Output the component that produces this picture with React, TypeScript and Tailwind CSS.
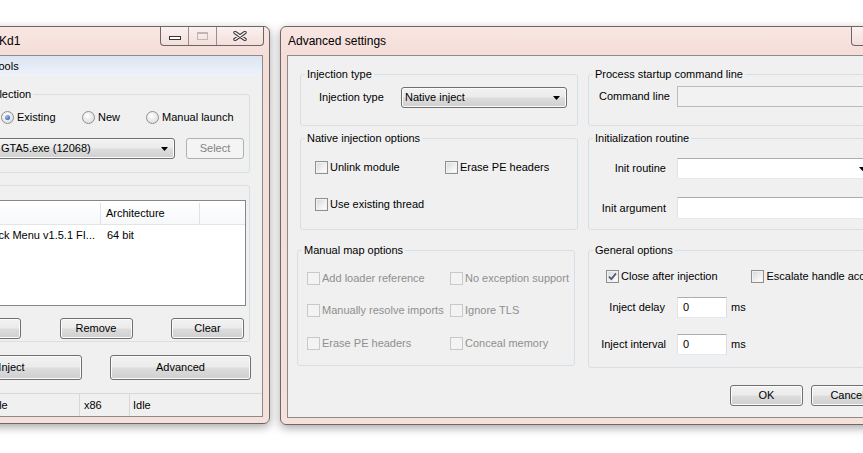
import React from "react";

type Kids = { children?: React.ReactNode; className?: string };

const btnFace =
  "flex items-center justify-center rounded-[3px] border border-[#707070] bg-[linear-gradient(to_bottom,#f2f2f2_0%,#ebebeb_48%,#dddddd_52%,#cfcfcf_100%)] shadow-[inset_0_0_0_1px_#fbfbfb]";

function Button({ children, className = "" }: Kids) {
  return <div className={`${btnFace} ${className}`}>{children}</div>;
}

function Arrow() {
  return (
    <svg width="7" height="4" viewBox="0 0 7 4" className="shrink-0">
      <path d="M0 0h7L3.5 4z" fill="#000" />
    </svg>
  );
}

function Combo({ children, className = "" }: Kids) {
  return (
    <div
      className={`flex h-[21px] items-center justify-between rounded-[3px] border border-[#707070] bg-[linear-gradient(to_bottom,#f2f2f2_0%,#ebebeb_48%,#dddddd_52%,#cfcfcf_100%)] pl-[3px] pr-[6px] shadow-[inset_0_0_0_1px_#fbfbfb] ${className}`}
    >
      <span className="whitespace-nowrap">{children}</span>
      <Arrow />
    </div>
  );
}

function TextBox({ children, className = "" }: Kids) {
  return (
    <div
      className={`flex items-center border border-[#abadb3] border-b-[#e3e9ef] border-l-[#e2e3ea] border-r-[#dbdfe6] bg-white pl-[5px] ${className}`}
    >
      {children}
    </div>
  );
}

function Group({ title, children, className = "" }: Kids & { title: string }) {
  return (
    <fieldset className={`min-w-0 rounded-[3px] border border-[#d5dfe5] ${className}`}>
      <legend className="ml-[4px] px-[2px] leading-[14px]">{title}</legend>
      {children}
    </fieldset>
  );
}

function Check({
  label,
  checked = false,
  disabled = false,
  className = "",
}: {
  label: string;
  checked?: boolean;
  disabled?: boolean;
  className?: string;
}) {
  return (
    <div className={`flex h-[17px] items-center ${className}`}>
      <span
        className={`flex h-[13px] w-[13px] shrink-0 items-center justify-center border ${
          disabled
            ? "border-[#c9c9c9] bg-[#f3f3f3]"
            : "border-[#8e8f8f] bg-[linear-gradient(135deg,#d6d6d6,#f4f4f4_65%,#ffffff)] shadow-[inset_0_0_0_1px_#f1f1f1]"
        }`}
      >
        {checked && (
          <svg width="9" height="9" viewBox="0 0 9 9">
            <path d="M1 4.6l2.4 2.5L8 1.4" fill="none" stroke="#4e5c78" strokeWidth="1.8" />
          </svg>
        )}
      </span>
      <span className={`ml-[2px] whitespace-nowrap ${disabled ? "text-[#8f8f8f]" : ""}`}>{label}</span>
    </div>
  );
}

function Radio({ label, checked = false, className = "" }: { label: string; checked?: boolean; className?: string }) {
  return (
    <div className={`flex h-[17px] items-center ${className}`}>
      <span className="flex h-[13px] w-[13px] shrink-0 items-center justify-center rounded-full border border-[#8e8f8f] bg-[radial-gradient(circle_at_40%_35%,#ffffff,#d5d5d5)]">
        {checked && (
          <span className="h-[5px] w-[5px] rounded-full bg-[radial-gradient(circle_at_35%_35%,#9cc0f2,#1b4d9a)]" />
        )}
      </span>
      <span className="ml-[3px] whitespace-nowrap">{label}</span>
    </div>
  );
}

function CloseGlyph() {
  return (
    <svg width="14" height="10" viewBox="0 0 14 10">
      <path d="M2 1.5l10 7M12 1.5l-10 7" stroke="#3d3636" strokeWidth="3.4" strokeLinecap="round" />
      <path d="M2 1.5l10 7M12 1.5l-10 7" stroke="#ffffff" strokeWidth="1.4" strokeLinecap="round" />
    </svg>
  );
}

const frame =
  "absolute top-[26px] flex flex-col rounded-[6px] border border-[#6f6666] bg-[linear-gradient(to_bottom,#f8e6e2,#f5ddd8_28px,#f6e0db)] shadow-[0_3px_10px_rgba(0,0,0,0.35)]";

function LeftWindow() {
  return (
    <div className={`${frame} left-[-80px] h-[398px] w-[350px]`}>
      <div className="flex h-[28px] items-start justify-between">
        <span className="pl-[78px] text-[12px] leading-[29px]">Kd1</span>
        <div className="mr-[5px] flex h-[19px] w-[104px] overflow-hidden rounded-b-[4px] border border-t-0 border-[#6f6464] bg-[linear-gradient(to_bottom,#fbf1ef,#f2dfdb)]">
          <div className="flex w-[28px] items-center justify-center border-r border-[#9b8d8b] pt-[3px]">
            <span className="h-[4px] w-[12px] border border-[#3b3535] bg-white" />
          </div>
          <div className="flex w-[28px] items-center justify-center border-r border-[#9b8d8b]">
            <span className="h-[8px] w-[11px] border border-t-2 border-[#c3b5b3]" />
          </div>
          <div className="flex flex-1 items-center justify-center">
            <CloseGlyph />
          </div>
        </div>
      </div>

      <div className="mx-[6px] flex h-[362px] flex-col border border-[#8b8b8b] bg-[#f0f0f0]">
        <div className="flex h-[20px] items-center bg-[linear-gradient(to_bottom,#dde5f3,#eef2f9)] pl-[65px]">
          <span>Tools</span>
        </div>

        <Group title="Process selection" className="ml-[10px] mt-[11px] w-[312px]">
          <div className="pb-[13px] pt-[8px]">
            <div className="flex pl-[62px]">
              <Radio checked label="Existing" className="w-[81px]" />
              <Radio label="New" className="w-[64px]" />
              <Radio label="Manual launch" />
            </div>
            <div className="mt-[12px] flex items-center pl-[8px]">
              <span className="w-[50px]">Process</span>
              <Combo className="w-[178px]">GTA5.exe (12068)</Combo>
              <div className="ml-[11px] flex h-[21px] w-[58px] items-center justify-center rounded-[3px] border border-[#adb2b5] bg-[#f4f4f4] text-[#838383]">
                Select
              </div>
            </div>
          </div>
        </Group>

        <Group title="Modules" className="ml-[10px] mt-[5px] w-[312px]">
          <div className="pb-[2px] pl-[4px] pt-[8px]">
            <div className="h-[106px] w-[303px] border border-[#828790] bg-white">
              <div className="flex h-[24px] border-b border-[#e5e5e5] bg-[linear-gradient(to_bottom,#ffffff,#f7f8fa)] pt-[2px]">
                <div className="flex w-[157px] items-center border-r border-[#dfe3e8] pl-[5px]">Name</div>
                <div className="flex w-[99px] items-center border-r border-[#dfe3e8] pl-[5px]">Architecture</div>
              </div>
              <div className="flex h-[20px] items-center">
                <div className="w-[157px] overflow-hidden whitespace-nowrap pr-[6px] text-right">
                  Stack Menu v1.5.1 FI...
                </div>
                <div className="pl-[6px]">64 bit</div>
              </div>
            </div>
            <div className="mt-[12px] flex w-[303px] justify-between pl-[5px] pr-[2px]">
              <Button className="h-[21px] w-[73px]">Add</Button>
              <Button className="h-[21px] w-[73px]">Remove</Button>
              <Button className="h-[21px] w-[73px]">Clear</Button>
            </div>
          </div>
        </Group>

        <div className="mt-[13px] flex gap-[28px] pl-[13px]">
          <Button className="h-[25px] w-[141px]">Inject</Button>
          <Button className="h-[25px] w-[141px]">Advanced</Button>
        </div>

        <div className="mt-auto flex h-[23px] items-center border-t border-[#d7d7d7]">
          <div className="flex h-full w-[152px] items-center border-r border-[#d7d7d7] pl-[62px]">Idle</div>
          <div className="flex h-full w-[50px] items-center border-r border-[#d7d7d7] pl-[4px]">x86</div>
          <div className="pl-[3px]">Idle</div>
        </div>
      </div>
    </div>
  );
}

function RightWindow() {
  return (
    <div className={`${frame} left-[280px] h-[399px] w-[622px]`}>
      <div className="flex h-[28px] items-start justify-between">
        <span className="pl-[7px] text-[12px] leading-[29px]">Advanced settings</span>
        <div className="mr-[3px] flex h-[19px] w-[47px] items-center justify-center rounded-b-[4px] border border-t-0 border-[#6f6464] bg-[linear-gradient(to_bottom,#fbf1ef,#f2dfdb)]">
          <CloseGlyph />
        </div>
      </div>

      <div className="mx-[6px] h-[363px] border border-[#8b8b8b] bg-[#f0f0f0] pl-[12px] pt-[11px]">
        <div className="flex">
          <Group title="Injection type" className="w-[278px]">
            <div className="flex items-center pb-[17px] pl-[18px] pt-[6px]">
              <span className="w-[82px]">Injection type</span>
              <Combo className="w-[166px]">Native inject</Combo>
            </div>
          </Group>
          <Group title="Process startup command line" className="ml-[10px] w-[295px]">
            <div className="flex items-center pb-[18px] pt-[5px]">
              <span className="w-[77px] whitespace-nowrap pl-[10px]">Command line</span>
              <div className="ml-[11px] h-[21px] w-[195px] border border-[#b8bbc0] bg-[#f2f2f2]" />
            </div>
          </Group>
        </div>

        <div className="mt-[5px] flex">
          <Group title="Native injection options" className="w-[278px]">
            <div className="pb-[16px] pl-[14px] pt-[14px]">
              <div className="flex">
                <Check label="Unlink module" className="w-[130px]" />
                <Check label="Erase PE headers" />
              </div>
              <Check label="Use existing thread" className="mt-[20px]" />
            </div>
          </Group>
          <Group title="Initialization routine" className="ml-[10px] w-[295px]">
            <div className="pb-[10px] pt-[13px]">
              <div className="flex items-center">
                <span className="w-[77px] text-right">Init routine</span>
                <div className="ml-[11px] flex h-[21px] w-[195px] items-center justify-end border border-[#abadb3] border-b-[#e3e9ef] border-l-[#e2e3ea] bg-white pr-[5px]">
                  <Arrow />
                </div>
              </div>
              <div className="mt-[18px] flex items-center">
                <span className="w-[77px] text-right">Init argument</span>
                <TextBox className="ml-[11px] h-[22px] w-[195px]" />
              </div>
            </div>
          </Group>
        </div>

        <div className="mt-[13px] flex items-start">
          <Group title="Manual map options" className="-ml-[3px] w-[278px]">
            <div className="pb-[13px] pl-[9px] pt-[13px]">
              <div className="flex">
                <Check disabled label="Add loader reference" className="w-[143px]" />
                <Check disabled label="No exception support" />
              </div>
              <div className="mt-[15px] flex">
                <Check disabled label="Manually resolve imports" className="w-[143px]" />
                <Check disabled label="Ignore TLS" />
              </div>
              <div className="mt-[16px] flex">
                <Check disabled label="Erase PE headers" className="w-[143px]" />
                <Check disabled label="Conceal memory" />
              </div>
            </div>
          </Group>
          <Group title="General options" className="ml-[13px] w-[295px]">
            <div className="pb-[12px] pt-[11px]">
              <div className="flex pl-[17px]">
                <Check checked label="Close after injection" className="w-[150px]" />
                <Check label="Escalate handle access" />
              </div>
              <div className="mt-[12px] flex items-center">
                <span className="w-[76px] text-right">Inject delay</span>
                <TextBox className="ml-[12px] h-[21px] w-[50px]">0</TextBox>
                <span className="ml-[4px]">ms</span>
              </div>
              <div className="mt-[16px] flex items-center">
                <span className="w-[77px] text-right">Inject interval</span>
                <TextBox className="ml-[11px] h-[21px] w-[50px]">0</TextBox>
                <span className="ml-[4px]">ms</span>
              </div>
            </div>
          </Group>
        </div>

        <div className="mt-[17px] flex justify-end gap-[8px] pr-[10px]">
          <Button className="h-[21px] w-[73px]">OK</Button>
          <Button className="h-[21px] w-[73px]">Cancel</Button>
        </div>
      </div>
    </div>
  );
}

export default function App() {
  return (
    <div className="relative h-[453px] w-[863px] overflow-hidden bg-white font-[family-name:'Liberation_Sans',Arial,sans-serif] text-[11px] leading-[13px] text-black">
      <LeftWindow />
      <RightWindow />
    </div>
  );
}
